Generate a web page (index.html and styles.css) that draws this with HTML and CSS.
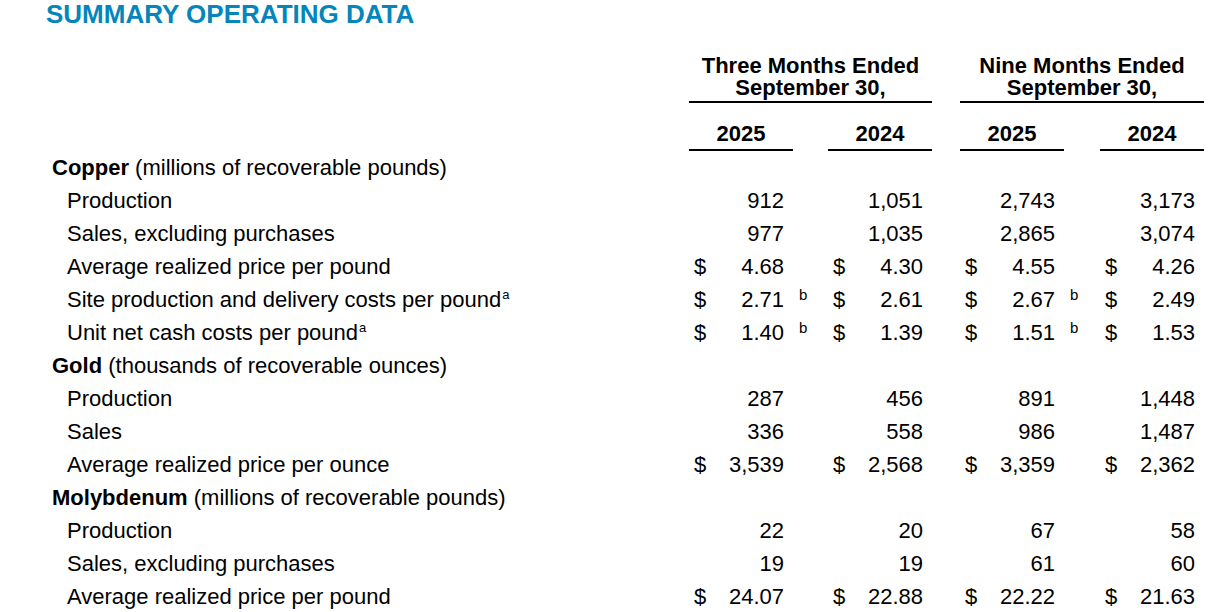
FILE: index.html
```html
<!DOCTYPE html>
<html lang="en">
<head>
<meta charset="utf-8">
<title>Summary Operating Data</title>
<link rel="stylesheet" href="styles.css">
</head>
<body>
<div class="page">
  <h1 class="title">SUMMARY OPERATING DATA</h1>
  <div class="sheet">
    <div class="row head-group">
      <div></div>
      <div class="group"><div>Three Months Ended</div><div>September 30,</div></div>
      <div></div>
      <div class="group"><div>Nine Months Ended</div><div>September 30,</div></div>
    </div>
    <div class="row head-years">
      <div></div>
      <div class="year">2025</div><div></div>
      <div class="year">2024</div><div></div>
      <div class="year">2025</div><div></div>
      <div class="year">2024</div>
    </div>

    <div class="row"><div class="lbl cat"><b>Copper</b> (millions of recoverable pounds)</div></div>
    <div class="row">
      <div class="lbl sub">Production</div>
      <div class="num"><span></span><span>912</span></div><div></div>
      <div class="num"><span></span><span>1,051</span></div><div></div>
      <div class="num"><span></span><span>2,743</span></div><div></div>
      <div class="num"><span></span><span>3,173</span></div>
    </div>
    <div class="row">
      <div class="lbl sub">Sales, excluding purchases</div>
      <div class="num"><span></span><span>977</span></div><div></div>
      <div class="num"><span></span><span>1,035</span></div><div></div>
      <div class="num"><span></span><span>2,865</span></div><div></div>
      <div class="num"><span></span><span>3,074</span></div>
    </div>
    <div class="row">
      <div class="lbl sub">Average realized price per pound</div>
      <div class="num"><span>$</span><span>4.68</span></div><div></div>
      <div class="num"><span>$</span><span>4.30</span></div><div></div>
      <div class="num"><span>$</span><span>4.55</span></div><div></div>
      <div class="num"><span>$</span><span>4.26</span></div>
    </div>
    <div class="row">
      <div class="lbl sub">Site production and delivery costs per pound<sup class="fa">a</sup></div>
      <div class="num"><span>$</span><span>2.71</span></div><div class="fn">b</div>
      <div class="num"><span>$</span><span>2.61</span></div><div></div>
      <div class="num"><span>$</span><span>2.67</span></div><div class="fn">b</div>
      <div class="num"><span>$</span><span>2.49</span></div>
    </div>
    <div class="row">
      <div class="lbl sub">Unit net cash costs per pound<sup class="fa">a</sup></div>
      <div class="num"><span>$</span><span>1.40</span></div><div class="fn">b</div>
      <div class="num"><span>$</span><span>1.39</span></div><div></div>
      <div class="num"><span>$</span><span>1.51</span></div><div class="fn">b</div>
      <div class="num"><span>$</span><span>1.53</span></div>
    </div>

    <div class="row"><div class="lbl cat"><b>Gold</b> (thousands of recoverable ounces)</div></div>
    <div class="row">
      <div class="lbl sub">Production</div>
      <div class="num"><span></span><span>287</span></div><div></div>
      <div class="num"><span></span><span>456</span></div><div></div>
      <div class="num"><span></span><span>891</span></div><div></div>
      <div class="num"><span></span><span>1,448</span></div>
    </div>
    <div class="row">
      <div class="lbl sub">Sales</div>
      <div class="num"><span></span><span>336</span></div><div></div>
      <div class="num"><span></span><span>558</span></div><div></div>
      <div class="num"><span></span><span>986</span></div><div></div>
      <div class="num"><span></span><span>1,487</span></div>
    </div>
    <div class="row">
      <div class="lbl sub">Average realized price per ounce</div>
      <div class="num"><span>$</span><span>3,539</span></div><div></div>
      <div class="num"><span>$</span><span>2,568</span></div><div></div>
      <div class="num"><span>$</span><span>3,359</span></div><div></div>
      <div class="num"><span>$</span><span>2,362</span></div>
    </div>

    <div class="row"><div class="lbl cat"><b>Molybdenum</b> (millions of recoverable pounds)</div></div>
    <div class="row">
      <div class="lbl sub">Production</div>
      <div class="num"><span></span><span>22</span></div><div></div>
      <div class="num"><span></span><span>20</span></div><div></div>
      <div class="num"><span></span><span>67</span></div><div></div>
      <div class="num"><span></span><span>58</span></div>
    </div>
    <div class="row">
      <div class="lbl sub">Sales, excluding purchases</div>
      <div class="num"><span></span><span>19</span></div><div></div>
      <div class="num"><span></span><span>19</span></div><div></div>
      <div class="num"><span></span><span>61</span></div><div></div>
      <div class="num"><span></span><span>60</span></div>
    </div>
    <div class="row">
      <div class="lbl sub">Average realized price per pound</div>
      <div class="num"><span>$</span><span>24.07</span></div><div></div>
      <div class="num"><span>$</span><span>22.88</span></div><div></div>
      <div class="num"><span>$</span><span>22.22</span></div><div></div>
      <div class="num"><span>$</span><span>21.63</span></div>
    </div>
  </div>
</div>
</body>
</html>
```
FILE: styles.css
```css
html, body {
  margin: 0;
  padding: 0;
  background: #ffffff;
}

.page {
  font-family: "Liberation Sans", Arial, sans-serif;
  color: #000000;
  width: 1209px;
  height: 612px;
  overflow: hidden;
}

.title {
  margin: 0;
  padding-left: 46px;
  font-size: 26px;
  line-height: 28px;
  font-weight: bold;
  color: #0586bb;
}

.sheet {
  padding-left: 52px;
  margin-top: 27px;
}

.row {
  display: grid;
  grid-template-columns: 637px 104px 35px 104px 28px 104px 36px 104px;
  font-size: 22px;
  line-height: 33px;
  height: 33px;
}

.head-group {
  grid-template-columns: 637px 243px 28px 244px;
  height: auto;
  line-height: 22px;
  font-weight: bold;
}

.group {
  display: flex;
  flex-direction: column;
  align-items: center;
  padding-bottom: 2px;
  border-bottom: 2px solid #000;
}

.head-years {
  height: auto;
  line-height: 22px;
  margin-top: 20px;
  font-weight: bold;
}

.year {
  text-align: center;
  padding-bottom: 4px;
  border-bottom: 2px solid #000;
}

.lbl {
  white-space: nowrap;
}

.cat {
  grid-column: 1 / -1;
}

.sub {
  padding-left: 15px;
}

.num {
  display: flex;
  justify-content: space-between;
  padding: 0 9px 0 5px;
}

.fn {
  font-size: 15px;
  padding-left: 6px;
  position: relative;
  top: -5px;
}

.fa {
  font-size: 13px;
  line-height: 0;
  vertical-align: 8px;
  margin-left: 1px;
}
```
